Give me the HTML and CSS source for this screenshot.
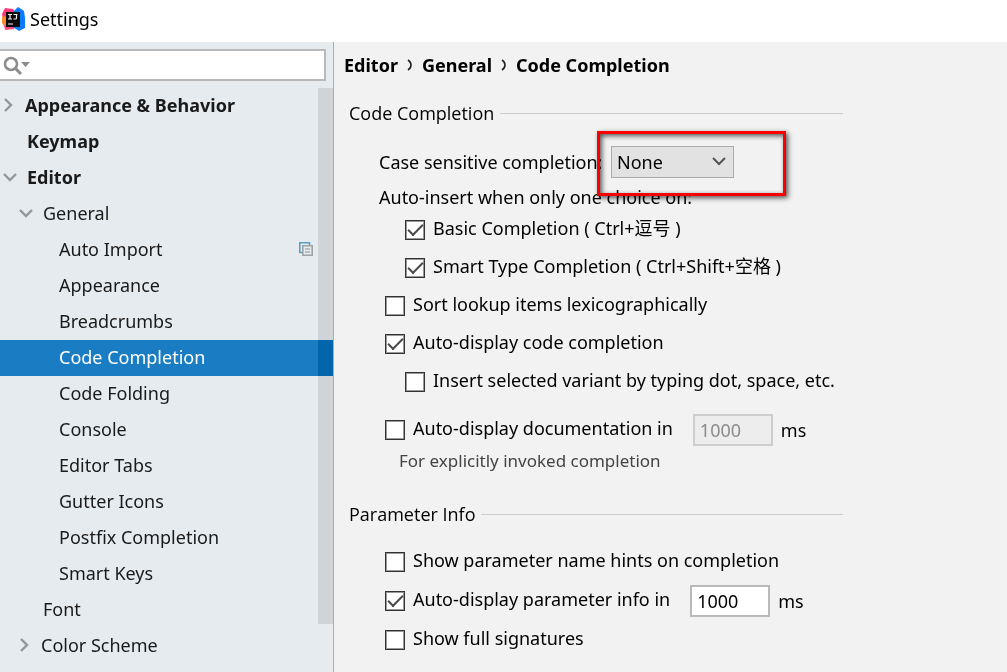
FILE: index.html
```html
<!DOCTYPE html>
<html lang="en">
<head>
<meta charset="utf-8">
<title>Settings</title>
<link rel="stylesheet" href="styles.css">
</head>
<body>
<header class="titlebar">
  <svg class="logo" width="24" height="24" viewBox="0 0 24 24" aria-hidden="true">
    <path d="M4 1l8 1 3 4v6H2L1 7z" fill="#fc3a78"/>
    <path d="M1 10l9-2v11l-6 1-3-4z" fill="#f98b2a"/>
    <path d="M3 18h12l-2 4-9 1z" fill="#fe4a7d"/>
    <path d="M13 4l4-4 6 4 1 7v10l-6 3-6-4z" fill="#087cfa"/>
    <path d="M5 5h14v15H5z" fill="#0a0a0a"/>
    <path d="M7 7.500h4M9 7.500v5M7 12h4M12.500 7.500h4M15.500 7.500v3.500q0 1-1 1h-2M7 17h5" stroke="#eee" stroke-width="1.200" fill="none"/>
  </svg>
  <h1 class="title">Settings</h1>
</header>
<div class="window">
  <aside class="sidebar">
    <div class="search">
      <svg class="search-icon" width="28" height="20" viewBox="0 0 28 20" aria-hidden="true">
        <circle cx="9" cy="9" r="6" fill="none" stroke="#8c8c8c" stroke-width="2.6"/>
        <path d="M13 13l6 6" stroke="#8c8c8c" stroke-width="3"/>
        <path d="M19 7h9l-4.500 5z" fill="#8c8c8c"/>
      </svg>
      <input class="search-input" type="text" aria-label="Search settings">
    </div>
    <nav class="tree">
      <a class="node node-root" href="#"><svg class="arrow" width="14" height="16" viewBox="0 0 14 16"><path d="M3 2l6 6-6 6"/></svg>Appearance &amp; Behavior</a>
      <a class="node node-root node-leaf" href="#">Keymap</a>
      <a class="node node-root node-open" href="#"><svg class="arrow" width="16" height="16" viewBox="0 0 16 16"><path d="M2 5l6 6 6-6"/></svg>Editor</a>
      <a class="node node-group node-open" href="#"><svg class="arrow" width="16" height="16" viewBox="0 0 16 16"><path d="M2 5l6 6 6-6"/></svg>General</a>
      <a class="node node-page" href="#">Auto Import
        <svg class="copy" width="14" height="14" viewBox="0 0 14 14" aria-hidden="true"><path d="M3 10.500H.8V.8h9.700V3" fill="none" stroke="#5b9fc4" stroke-width="1.600"/><path d="M3.800 3.800h9.400v9.400H3.800z" fill="#e6ebef" stroke="#a0a2a4" stroke-width="1.600"/><path d="M6 7h5M6 10h5" stroke="#8f9193"/></svg>
      </a>
      <a class="node node-page" href="#">Appearance</a>
      <a class="node node-page" href="#">Breadcrumbs</a>
      <a class="node node-page node-selected" href="#" aria-current="page">Code Completion</a>
      <a class="node node-page" href="#">Code Folding</a>
      <a class="node node-page" href="#">Console</a>
      <a class="node node-page" href="#">Editor Tabs</a>
      <a class="node node-page" href="#">Gutter Icons</a>
      <a class="node node-page" href="#">Postfix Completion</a>
      <a class="node node-page" href="#">Smart Keys</a>
      <a class="node node-group node-leaf" href="#">Font</a>
      <a class="node node-group" href="#"><svg class="arrow" width="14" height="16" viewBox="0 0 14 16"><path d="M3 2l6 6-6 6"/></svg>Color Scheme</a>
      <div class="scroll-thumb"></div>
    </nav>
  </aside>
  <main class="content">
    <nav class="crumbs" aria-label="Breadcrumb">
      <span>Editor</span>
      <svg class="crumb-sep" width="6" height="12" viewBox="0 0 6 12"><path d="M1 1q3 2 3 5t-3 5"/></svg>
      <span>General</span>
      <svg class="crumb-sep" width="6" height="12" viewBox="0 0 6 12"><path d="M1 1q3 2 3 5t-3 5"/></svg>
      <span>Code Completion</span>
    </nav>
    <form class="form">
      <section>
        <h2 class="section-title">Code Completion</h2>
        <div class="case-row">
          <label class="case-label" for="case">Case sensitive completion:</label>
          <div class="select-wrap">
            <select class="select" id="case"><option>None</option><option>All</option><option>First letter</option></select>
            <svg class="chevron" width="14" height="10" viewBox="0 0 14 10"><path d="M1 2l6 6 6-6"/></svg>
            <div class="highlight"></div>
          </div>
        </div>
        <p class="note">Auto-insert when only one choice on:</p>
        <div class="row row-nested"><label class="check"><input class="box" type="checkbox" checked><span>Basic Completion ( Ctrl+逗号 )</span></label></div>
        <div class="row row-nested"><label class="check"><input class="box" type="checkbox" checked><span>Smart Type Completion ( Ctrl+Shift+空格 )</span></label></div>
        <div class="row"><label class="check"><input class="box" type="checkbox"><span>Sort lookup items lexicographically</span></label></div>
        <div class="row"><label class="check"><input class="box" type="checkbox" checked><span>Auto-display code completion</span></label></div>
        <div class="row row-nested"><label class="check"><input class="box" type="checkbox"><span>Insert selected variant by typing dot, space, etc.</span></label></div>
        <div class="row row-spaced">
          <label class="check"><input class="box" type="checkbox"><span>Auto-display documentation in</span></label>
          <input class="delay" id="doc-delay" type="text" value="1000" disabled>
          <label for="doc-delay">ms</label>
        </div>
        <p class="hint">For explicitly invoked completion</p>
      </section>
      <section class="params">
        <h2 class="section-title">Parameter Info</h2>
        <div class="row row-tall"><label class="check"><input class="box" type="checkbox"><span>Show parameter name hints on completion</span></label></div>
        <div class="row row-tall">
          <label class="check"><input class="box" type="checkbox" checked><span>Auto-display parameter info in</span></label>
          <input class="delay" id="info-delay" type="text" value="1000">
          <label for="info-delay">ms</label>
        </div>
        <div class="row row-tall"><label class="check"><input class="box" type="checkbox"><span>Show full signatures</span></label></div>
      </section>
    </form>
  </main>
</div>
</body>
</html>
```
FILE: styles.css
```css
* { box-sizing: border-box; }

body {
  margin: 0;
  height: 100vh;
  display: flex;
  flex-direction: column;
  overflow: hidden;
  background: #fff;
  color: #000;
  font: 18px/24px "Noto Sans", "Noto Sans CJK SC", sans-serif;
}

.titlebar {
  display: flex;
  align-items: center;
  gap: 5px;
  height: 42px;
  flex: none;
  padding: 0 1px 4px;
}
.title { margin: 0; font-size: 18px; font-weight: 400; }

.window { display: flex; flex: 1; min-height: 0; }

.sidebar {
  width: 334px;
  flex: none;
  background: #e6ebef;
  border-right: 1px solid #adadad;
  overflow: hidden;
}
.search {
  display: flex;
  align-items: center;
  height: 32px;
  margin: 7px 7px 7px 0;
  background: #fff;
  border: 2px solid #b9b9b9;
  border-left: 0;
}
.search-icon { flex: none; margin-left: 2px; }
.search-input { flex: 1; min-width: 0; border: 0; outline: 0; background: none; font: inherit; }

.tree { position: relative; }
.node {
  display: flex;
  align-items: center;
  height: 36px;
  padding-bottom: 2px;
  color: #1a1a1a;
  text-decoration: none;
}
.node-root { padding-left: 2px; gap: 9px; font-weight: 700; }
.node-group { padding-left: 18px; gap: 9px; }
.node-page { padding-left: 59px; }
.node-root.node-leaf { padding-left: 27px; }
.node-group.node-leaf { padding-left: 43px; }
.node-selected { background: #1a7dc4; color: #fff; }
.arrow { flex: none; fill: none; stroke: #949698; stroke-width: 2.4; }
.copy { margin-left: auto; margin-right: 20px; }
.scroll-thumb {
  position: absolute;
  top: 0;
  right: 0;
  width: 15px;
  height: 536px;
  background: #171717;
  mix-blend-mode: difference;
}

.content { flex: 1; min-width: 0; background: #f2f2f2; padding: 0 15px 0 10px; }
.crumbs {
  display: flex;
  align-items: center;
  gap: 9px;
  height: 47px;
  padding-bottom: 2px;
  font-weight: 700;
}
.crumb-sep { fill: none; stroke: #222; stroke-width: 1.6; }

.form { max-width: 494px; margin-left: 5px; }
.section-title {
  display: flex;
  align-items: center;
  gap: 6px;
  height: 48px;
  margin: 0;
  font-family: "Open Sans", sans-serif;
  font-size: 18px;
  font-weight: 400;
}
.section-title::after { content: ""; flex: 1; height: 1px; background: #cdcdcd; }

.case-row { display: flex; align-items: center; height: 50px; padding-left: 30px; }
.case-label { width: 232px; white-space: nowrap; }
.select-wrap { position: relative; }
.select {
  appearance: none;
  display: block;
  width: 123px;
  height: 32px;
  padding: 0 5px;
  border: 1px solid #adadad;
  border-radius: 0;
  background: #e2e2e2;
  color: #000;
  font: inherit;
}
.chevron {
  position: absolute;
  top: 10px;
  right: 8px;
  fill: none;
  stroke: #555;
  stroke-width: 2;
  pointer-events: none;
}
.highlight {
  position: absolute;
  top: -15px;
  left: -14px;
  width: 189px;
  height: 65px;
  border: 3px solid #f90000;
  box-shadow: 2px 2px 5px rgba(0, 0, 0, .65), inset 2px 2px 5px rgba(0, 0, 0, .65);
  pointer-events: none;
}

.note { margin: 0; padding: 0 0 4px 30px; line-height: 20px; }
.row {
  display: flex;
  align-items: center;
  height: 38px;
  padding-left: 36px;
  white-space: nowrap;
}
.row-nested { padding-left: 56px; }
.row-spaced { margin-top: 10px; }
.row-tall { height: 39px; }
.check { display: flex; align-items: center; gap: 8px; }
.check span { padding-bottom: 4px; }
.box {
  appearance: none;
  flex: none;
  display: grid;
  place-items: center;
  width: 20px;
  height: 20px;
  margin: 0;
  background: #fff;
  border: 1px solid #333;
  outline: 1px solid #999;
  outline-offset: -2px;
}
.box:checked::before {
  content: "";
  width: 13px;
  height: 6px;
  margin-bottom: 4px;
  border: solid #4a4a4a;
  border-width: 0 0 2px 2px;
  transform: rotate(-45deg);
}
.delay {
  width: 80px;
  height: 32px;
  margin: 0 8px 0 20px;
  padding: 0 5px;
  border: 2px solid #b9b9b9;
  background: #fff;
  color: #000;
  font: inherit;
}
.delay:disabled { background: #ededed; border-color: #cdcdcd; color: #8c8c8c; }
.hint { margin: 0; padding-left: 50px; font-size: 17px; color: #444; }

.params { padding-top: 17px; }
.params .section-title { margin-bottom: 4px; }
```
